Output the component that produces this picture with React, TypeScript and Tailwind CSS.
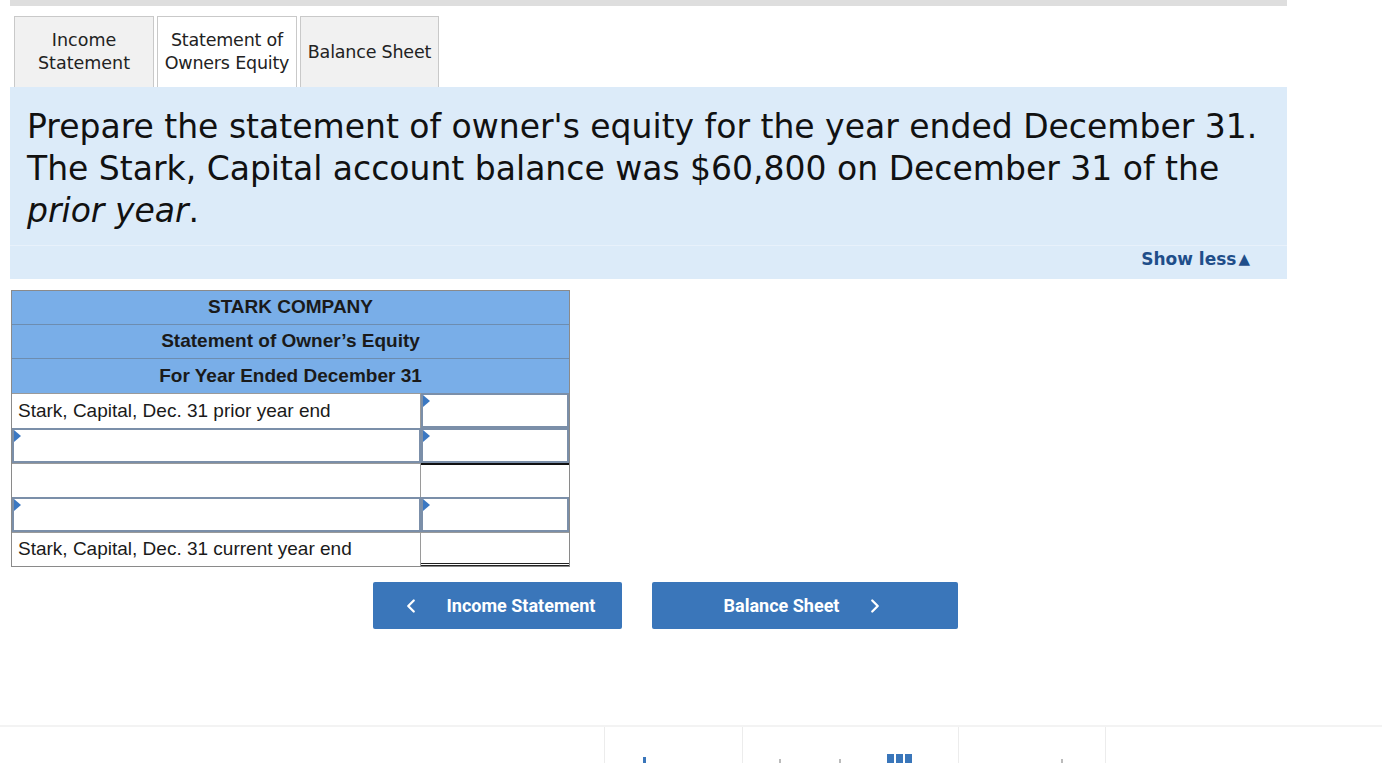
import { ChevronLeft, ChevronRight } from 'lucide-react';

const verdana = { fontFamily: '"DejaVu Sans", Verdana, sans-serif' };
const arial = { fontFamily: '"Liberation Sans", Arial, sans-serif' };

function Marker() {
  return (
    <span className="absolute left-0 top-0 w-0 h-0 border-t-[6px] border-b-[6px] border-l-[7px] border-t-transparent border-b-transparent border-l-[#3b78c2]" />
  );
}

function InputCell({ className = '' }: { className?: string }) {
  return (
    <div className={`relative h-full border-2 border-[#7b8fa9] bg-white ${className}`}>
      <Marker />
    </div>
  );
}

function App() {
  return (
    <div className="min-h-screen bg-white overflow-hidden relative">
      <div className="w-[1277px] ml-[10px]">
        <div className="h-[6px] bg-[#dedede]" />

        {/* tabs */}
        <div className="flex gap-[3px] pl-[4px] mt-[10px]" style={verdana}>
          <div className="w-[140px] h-[71px] flex items-center justify-center text-center text-[17.5px] leading-[23px] text-[#222] bg-[#f1f1f1] border border-b-0 border-[#c9c9c9]">
            Income
            <br />
            Statement
          </div>
          <div className="w-[140px] h-[71px] flex items-center justify-center text-center text-[17.5px] leading-[23px] text-[#222] bg-white border border-b-0 border-[#c9c9c9] tracking-[-0.2px]">
            Statement of
            <br />
            Owners Equity
          </div>
          <div className="w-[139px] h-[71px] flex items-center justify-center text-center text-[17.5px] leading-[23px] text-[#222] bg-[#f1f1f1] border border-b-0 border-[#c9c9c9] tracking-[-0.2px]">
            Balance Sheet
          </div>
        </div>

        {/* prompt */}
        <div className="bg-[#dcebf9]" style={verdana}>
          <div className="pl-[17px] pr-2 pt-[19px] pb-[13px] text-[33px] leading-[42px] text-[#111] border-b border-[#e8f1fb] whitespace-nowrap">
            Prepare the statement of owner's equity for the year ended December 31.
            <br />
            The Stark, Capital account balance was $60,800 on December 31 of the
            <br />
            <i>prior year</i>.
          </div>
          <div className="h-[33px] flex items-center justify-end pr-[37px] pb-[6px] text-[17px] font-bold text-[#1f4e8a]">
            Show less
            <span className="text-[15px] ml-[2px]">▲</span>
          </div>
        </div>

        {/* statement table */}
        <div className="mt-[11px] ml-[1px] w-[559px] border border-[#8a8a8a]" style={arial}>
          <div className="h-[34px] flex items-center justify-center bg-[#79aee8] text-[19px] font-bold text-[#1a1a1a] border-b border-[#6d8db0]">
            STARK COMPANY
          </div>
          <div className="h-[34px] flex items-center justify-center bg-[#79aee8] text-[19px] font-bold text-[#1a1a1a] border-b border-[#6d8db0]">
            Statement of Owner’s Equity
          </div>
          <div className="h-[34px] flex items-center justify-center bg-[#79aee8] text-[19px] font-bold text-[#1a1a1a]">
            For Year Ended December 31
          </div>

          <div className="grid grid-cols-[409px_148px] grid-rows-[35px_35px_34px_35px_34px] bg-white text-[19px] text-[#1a1a1a]">
            <div className="flex items-center pl-[6px] border-t border-r border-[#9a9a9a]">
              Stark, Capital, Dec. 31 prior year end
            </div>
            <InputCell />

            <InputCell />
            <InputCell />

            <div className="border-t border-r border-[#9a9a9a]" />
            <div className="border-t-2 border-[#111]" />

            <InputCell />
            <InputCell />

            <div className="flex items-center pl-[6px] border-t border-r border-[#9a9a9a]">
              Stark, Capital, Dec. 31 current year end
            </div>
            <div className="border-t border-[#9a9a9a] border-b-[3px] border-b-[#222] border-double" />
          </div>
        </div>

        {/* navigation buttons */}
        <div className="flex mt-[15px] pl-[363px] gap-[30px]" style={{ fontFamily: 'Roboto, "Open Sans", sans-serif' }}>
          <button className="w-[249px] h-[47px] rounded-[2px] bg-[#3a76ba] text-white text-[18px] font-bold flex items-center justify-center gap-[25px]">
            <ChevronLeft size={22} strokeWidth={2.5} />
            Income Statement
          </button>
          <button className="w-[306px] h-[47px] rounded-[2px] bg-[#3a76ba] text-white text-[18px] font-bold flex items-center justify-center gap-[25px]">
            Balance Sheet
            <ChevronRight size={22} strokeWidth={2.5} />
          </button>
        </div>
      </div>

      {/* footer */}
      <div className="mt-[96px] border-t-2 border-[#f3f3f3] h-[60px] flex">
        <div className="w-[604px]" />
        <div className="w-[138px] border-l border-[#ececec] relative">
          <span className="absolute left-[38px] top-[30px] w-[3px] h-[6px] bg-[#3a76ba]" />
        </div>
        <div className="w-[216px] border-l border-[#ececec] relative">
          <span className="absolute left-[36px] top-[32px] w-[2px] h-[4px] bg-[#bbb]" />
          <span className="absolute left-[96px] top-[32px] w-[2px] h-[4px] bg-[#bbb]" />
          <div className="absolute left-[144px] top-[27px] flex gap-[2px]">
            <span className="w-[7px] h-[9px] bg-[#3a76ba]" />
            <span className="w-[7px] h-[9px] bg-[#3a76ba]" />
            <span className="w-[7px] h-[9px] bg-[#3a76ba]" />
          </div>
        </div>
        <div className="w-[147px] border-l border-[#ececec] relative">
          <span className="absolute left-[102px] top-[32px] w-[2px] h-[4px] bg-[#bbb]" />
        </div>
        <div className="flex-1 border-l border-[#ececec]" />
      </div>
    </div>
  );
}

export default App;
